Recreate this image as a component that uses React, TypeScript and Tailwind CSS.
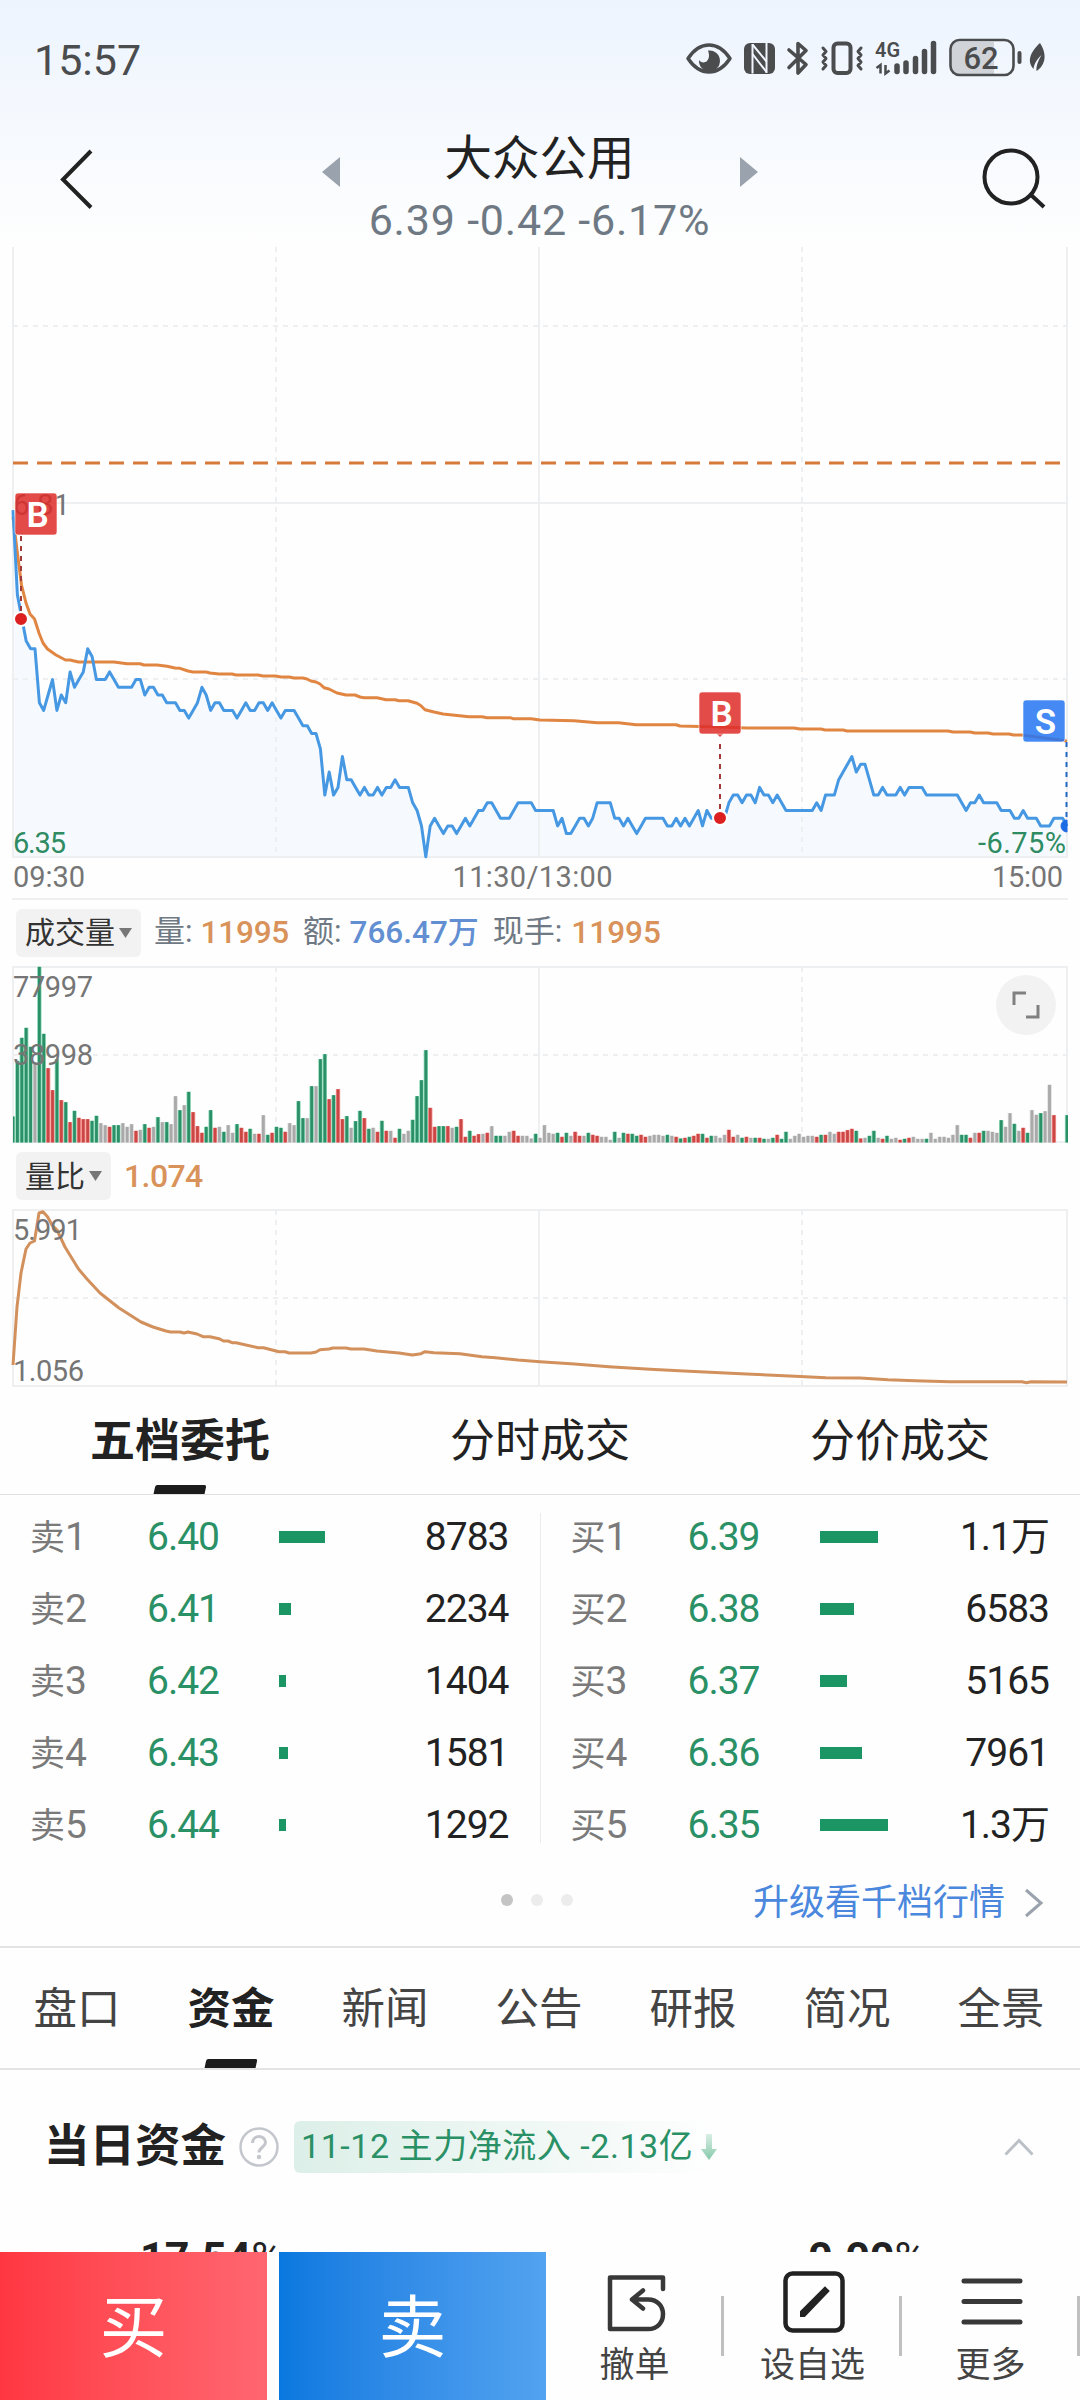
import type { ReactNode } from "react";

const FONT = "font-[Roboto,'Noto_Sans_CJK_SC',sans-serif]";

// One price per minute, in cents above the day's low of 6.35
const PRICES = (
  "45 34 31 28 27 27 20 19 21 23 19 21 20 24 22 23 24 27 26 23 23 23 24 23 22 22 22 22 23 23 " +
  "21 22 22 21 21 20 20 20 19 19 18 19 20 22 21 19 20 20 19 19 19 18 19 20 19 19 20 20 19 20 " +
  "19 18 19 19 19 18 17 17 16 16 14 8 11 8 9 13 10 10 9 8 9 8 8 9 8 9 9 10 9 9 " +
  "9 7 6 4 0 4 5 4 3 4 4 3 4 5 4 5 6 6 7 7 6 5 5 5 6 7 7 7 7 6 " +
  "6 6 6 6 4 5 3 3 4 5 5 4 5 7 7 7 7 5 5 4 5 4 3 4 5 5 5 5 5 4 " +
  "4 5 4 5 4 5 6 4 6 5 5 5 5 7 8 8 7 8 8 7 9 8 8 7 8 7 6 6 6 6 " +
  "6 6 6 7 6 8 8 8 10 11 12 13 11 12 12 10 8 8 9 8 8 8 9 8 9 9 9 9 8 8 " +
  "8 8 8 8 8 8 7 6 7 7 8 7 7 7 7 6 6 6 5 5 6 5 5 5 4 4 4 5 5 5 4"
).split(" ").map(Number);

const AVERAGE =
  "13,517 17,550 21.5,585 26,603 30,614 34.5,619 39,633 43,643 47.5,649 56,655 65.5,660 70,660 78.5,662 114,662 " +
  "127,663.7 140,663.7 144,665 157,665 167,666.3 175,668 180,668.3 188,671 193,672 206,672 210,673 219,674 232,674 " +
  "236,675 258,675 263,676 275.5,676 281,677 289,677 294,678 303,678 307,679 311,681 316,682 320,684 324,687.7 " +
  "329,689 337,693 346,695 355,695 360,697 364,697.7 377,697.7 386,699.7 395,699.7 399,700.7 408,700.7 417,703.3 " +
  "421,705.7 425,709.7 434,712 443,714 469,716.7 482,716.7 487,717.7 510,717.7 513,718.7 531,718.7 540,720 " +
  "574,720.7 597,722.7 618.5,722.7 636,724.7 676,724.7 680,726 719,727 747,728 794,728 800,729 821,729 825,730 " +
  "843,730 847,731 948,731 953,732 970,732 975,733 988,733 993,734 1009,734 1013.5,735 1022,735 1067,741";

const RATIO =
  "13,1365 17,1307 21,1273 26,1249 30,1243 34.5,1241 39,1213 43,1211.7 47.5,1216.7 52,1225 57,1230 65,1247 78.5,1269 " +
  "87,1279 100,1293 119,1308 141,1322 153,1327 166,1331 170.5,1332 180,1332 184,1333 188,1332 197,1334 203,1336.7 " +
  "210,1336.7 219,1338.7 223.5,1341 228,1341 232,1342.7 236,1342.7 258,1347.7 263.5,1347.7 279,1351.7 285,1351.7 " +
  "289,1353 311,1353 316,1352 320,1349.7 329,1349 333,1348 346,1348 351,1349 364,1349 377,1351 399,1353 412.5,1355 " +
  "421,1353.7 425,1351.7 434,1352.7 460,1353.7 482,1356.7 495.5,1357.7 518,1360 540,1361.7 574.5,1364 609,1366.7 " +
  "650,1369.3 689,1371.3 746.6,1374 795,1376.3 826,1377.7 860,1378 888,1379.7 915,1380.7 950,1381.7 1022,1381.7 " +
  "1026.5,1382.7 1031,1381.7 1067,1382";

// r = up, g = down, n = flat; the number is the height in thirds of a pixel
const VOLUMES = (
  "g78 g245 g314 g344 g287 n240 g527 g326 r223 r157 g250 r127 g121 r61 g95 r74 r70 r70 g65 g80 n58 n52 r47 g52 g52 n58 n47 n55 r35 n38 " +
  "g55 r44 n47 g76 n61 g61 n55 n139 g97 n112 g152 r91 r49 r29 g47 g97 r44 n47 g32 n52 n29 g55 r44 r32 g41 n26 r26 n82 g23 r29 " +
  "g47 g44 r32 n58 n52 g124 g73 n73 g169 n169 g250 g265 r130 g142 r160 r70 g79 n44 g64 g95 r73 g41 n44 r32 g65 r35 n35 r14 g41 n26 " +
  "n35 g68 g139 g187 g277 r104 r47 g49 g49 r49 n44 g47 r70 r17 g35 r20 r25 n26 r29 n49 g20 g20 n20 n32 r35 r20 n20 n20 n12 g26 " +
  "n14 n52 n29 n26 g29 r17 g29 n20 r32 r20 n20 g29 r23 r20 n17 n17 n8 g32 n14 g29 r26 g26 g20 r23 r17 n20 n23 n23 n20 g23 " +
  "n20 r17 g12 r14 g17 r20 r26 g26 r14 g20 n20 n14 n23 r38 r17 n23 g14 r17 n14 g14 r14 g11 n11 g14 r23 g11 g32 n11 n20 n26 " +
  "n17 n20 n20 r17 g23 r23 n32 n26 r32 r32 r37 r41 g35 r12 n14 g20 g35 n14 r11 g20 n11 n14 r8 g11 r14 n17 n11 n11 g11 n29 " +
  "n11 n17 n17 n14 n23 n52 g23 g23 r14 n29 r29 g35 n35 n32 n29 g67 n47 n88 g56 n35 r44 g29 n97 n83 g88 n94 n173 r82 n0 n0 g82"
).split(" ");

const BAR_COLORS: Record<string, [string, string]> = {
  g: ["#2b9068", "#8fd9b8"],
  r: ["#cb4745", "#f79a98"],
  n: ["#a9a9a9", "#dcdcdc"],
};

const minuteX = (i: number) => 13 + i * 4.392;
const priceY = (p: number) => 856.7 - p * 7.7;

const asks = [
  { label: "卖1", price: "6.40", bar: 46, vol: "8783" },
  { label: "卖2", price: "6.41", bar: 12, vol: "2234" },
  { label: "卖3", price: "6.42", bar: 7, vol: "1404" },
  { label: "卖4", price: "6.43", bar: 9, vol: "1581" },
  { label: "卖5", price: "6.44", bar: 7, vol: "1292" },
];

const bids = [
  { label: "买1", price: "6.39", bar: 58, vol: "1.1万" },
  { label: "买2", price: "6.38", bar: 34, vol: "6583" },
  { label: "买3", price: "6.37", bar: 27, vol: "5165" },
  { label: "买4", price: "6.36", bar: 42, vol: "7961" },
  { label: "买5", price: "6.35", bar: 68, vol: "1.3万" },
];

const sections = ["盘口", "资金", "新闻", "公告", "研报", "简况", "全景"];

function StatusIcons() {
  return (
    <svg width="364" height="40" viewBox="684 38 364 40" fill="none" stroke="#4a4c4e">
      {/* eye comfort */}
      <path d="M688 58.500C694 49.500 701 45 709 45s15 4.500 21 13.500c-6 9-13 13.500-21 13.500s-15-4.500-21-13.500z" strokeWidth="3.500" strokeLinejoin="round" />
      <path d="M708 50.500a10.500 10.500 0 1 1-9 9.500c1.500 2.500 5.500 3.500 8 1 2.800-3 2.200-7.500 1-10.500z" fill="#4a4c4e" stroke="none" />
      {/* NFC */}
      <rect x="744" y="43" width="31" height="31" rx="6" fill="#4a4c4e" stroke="none" />
      <path d="M752.500 44v29.500M766.500 43v30" stroke="#f1f6fe" strokeWidth="2" />
      <path d="M752.500 44.500l14 17M752.500 54l14 18" stroke="#f1f6fe" strokeWidth="2" />
      {/* bluetooth */}
      <path d="M789 50l17 14.500-8 8.500V43.500l8 7-17 17" strokeWidth="3.600" strokeLinejoin="round" strokeLinecap="round" />
      {/* vibrate */}
      <rect x="833.500" y="43.500" width="17" height="29.500" rx="4" strokeWidth="4" />
      <path d="M823 48l3 3.500-3 3.500 3 3.500-3 3.500 3 3.500-3 3.500M861 48l-3 3.500 3 3.500-3 3.500 3 3.500-3 3.500 3 3.500" strokeWidth="3" strokeLinejoin="round" strokeLinecap="round" />
      <text x="875" y="57" fontSize="21" fontWeight="600" textLength="25" lengthAdjust="spacingAndGlyphs" fill="#4a4c4e" stroke="none">4G</text>
      <path d="M880.500 73.500v-8.500l-4 3M885.500 65v8.500l4-3" strokeWidth="2.500" />
      <path d="M897 66v5.500M906 63v8.500M915.500 58.500v13M924.500 51.500v20M933.500 43.500v28" strokeWidth="5.500" strokeLinecap="round" />
      {/* battery */}
      <rect x="952" y="42" width="42" height="32" fill="#d0d3d7" stroke="none" />
      <rect x="950.500" y="40" width="63" height="35" rx="9" strokeWidth="2.600" />
      <text x="981" y="69" fontSize="31" fontWeight="500" textAnchor="middle" fill="#4a4c4e" stroke="none">62</text>
      <path d="M1019.500 53v9" strokeWidth="4" strokeLinecap="round" />
      <path d="M1040 43c6 9 7 20-2 27l-1.500 1c-.5-5 2-11 5-16-5 5-7.500 9-8 14-8-9-1-19 6.500-26z" fill="#4a4c4e" stroke="none" />
    </svg>
  );
}

function Grid({ top, bottom, dashes }: { top: number; bottom: number; dashes: number[] }) {
  return (
    <g stroke="#eeeff0" strokeWidth="2">
      <path d={`M13 ${top}V${bottom}M539 ${top}V${bottom}M1067 ${top}V${bottom}M12 ${bottom}H1068`} />
      <path d={`M276 ${top}V${bottom}M802 ${top}V${bottom}`} strokeDasharray="5 5" />
      {dashes.map((y) => (
        <path key={y} d={`M13 ${y}H1067`} strokeDasharray="5 5" />
      ))}
    </g>
  );
}

function Marker({ x, y, letter, color }: { x: number; y: number; letter: string; color: string }) {
  return (
    <g>
      <rect x={x} y={y} width="42" height="42" rx="3" fill={color} fillOpacity="0.85" stroke="#fff" strokeOpacity="0.6" />
      <text x={x + 22.5} y={y + 33.5} fontSize="35" fontWeight="600" fill="#fff" textAnchor="middle">{letter}</text>
    </g>
  );
}

function PriceChart() {
  const line = PRICES.map((p, i) => `${minuteX(i).toFixed(1)},${priceY(p).toFixed(1)}`).join(" ");
  return (
    <svg width="1080" height="653" viewBox="0 247 1080 653" fontSize="29" className="block shrink-0">
      <polygon points={`13,857 ${line} 1067,857`} fill="#f6faff" />
      <Grid top={247} bottom={857} dashes={[326, 679]} />
      <path d="M13 503H1067M12 899H1068" stroke="#eeeff0" strokeWidth="2" />
      <path d="M13 463H1067" stroke="#d67a3c" strokeWidth="3" strokeDasharray="15 9" />
      <polyline points={AVERAGE} fill="none" stroke="#e08642" strokeWidth="3" strokeLinejoin="round" />
      <polyline points={line} fill="none" stroke="#4798e2" strokeWidth="3" strokeLinejoin="round" />
      <text x="13" y="515" fill="#757575" fontSize="29.500" textLength="57">6.81</text>
      <text x="13" y="853" fill="#2e8b62" textLength="53">6.35</text>
      <text x="1066" y="853" fill="#2e8b62" textAnchor="end" textLength="88">-6.75%</text>
      <path d="M21 536V612M720 744V812" stroke="#a33a3a" strokeWidth="2" strokeDasharray="5 5" />
      <path d="M1066.500 742V820" stroke="#2568c4" strokeWidth="2" strokeDasharray="5 5" />
      <g stroke="#fff" strokeWidth="2">
        <circle cx="21" cy="619" r="7" fill="#dc2020" />
        <circle cx="720" cy="818" r="7" fill="#dc2020" />
      </g>
      <path d="M1067 820a6 6 0 0 0 0 12z" fill="#1d6ae5" stroke="#1d6ae5" strokeWidth="1" />
      <path d="M716 733l4 4 4-4z" fill="#e44b49" />
      <Marker x={15} y={493} letter="B" color="#de2b29" />
      <Marker x={699} y={692} letter="B" color="#de2b29" />
      <Marker x={1023} y={700} letter="S" color="#2474f2" />
      <g fill="#757575">
        <text x="13" y="887" textLength="72">09:30</text>
        <text x="532.500" y="887" textAnchor="middle" textLength="160">11:30/13:00</text>
        <text x="1063" y="887" textAnchor="end" textLength="71">15:00</text>
      </g>
    </svg>
  );
}

function VolumeChart() {
  const bars = VOLUMES.map((v, i) => ({ x: minuteX(i), h: Number(v.slice(1)) / 3, colors: BAR_COLORS[v[0]] }));
  return (
    <svg width="1080" height="179" viewBox="0 965 1080 179" fontSize="29" className="block shrink-0">
      <Grid top={967} bottom={1142} dashes={[1055]} />
      <path d="M12 967H1068" stroke="#eeeff0" strokeWidth="2" />
      <svg x="13" y="965" width="1055" height="179" viewBox="13 965 1055 179">
        {bars.map((b, i) => (
          <rect key={i} x={b.x - 2.2} y={1142.5 - b.h} width="4.400" height={b.h} fill={b.colors[1]} />
        ))}
        {bars.map((b, i) => (
          <rect key={i} x={b.x - 1.4} y={1142.5 - b.h} width="2.800" height={b.h} fill={b.colors[0]} />
        ))}
      </svg>
      <text x="13" y="997" fill="#757575" textLength="80">77997</text>
      <text x="13" y="1065" fill="#757575" textLength="80">38998</text>
      <circle cx="1026" cy="1005" r="30" fill="#f2f2f2" />
      <path d="M1014 1005v-12h12M1038 1005v12h-12" stroke="#808080" strokeWidth="3" fill="none" />
    </svg>
  );
}

function RatioChart() {
  return (
    <svg width="1080" height="180" viewBox="0 1208 1080 180" fontSize="29" className="block shrink-0">
      <Grid top={1210} bottom={1386} dashes={[1298]} />
      <path d="M12 1210H1068" stroke="#eeeff0" strokeWidth="2" />
      <polyline points={RATIO} fill="none" stroke="#d2905c" strokeWidth="3" strokeLinejoin="round" />
      <text x="13" y="1240" fill="#757575" textLength="69">5.991</text>
      <text x="13" y="1381" fill="#757575" textLength="71">1.056</text>
    </svg>
  );
}

function IndicatorPill({ children }: { children: ReactNode }) {
  return (
    <div className="flex h-12 items-center rounded-md bg-[#f2f2f2] pl-[9px] pr-2 text-[30px] text-[#333]">
      {children}
      <svg width="15" height="10" viewBox="0 0 15 10" className="ml-[3px]">
        <path d="M1 0h13L7.500 10z" fill="#777" />
      </svg>
    </div>
  );
}

function OrderColumn({ rows }: { rows: typeof asks }) {
  return (
    <div className="w-[540px]">
      {rows.map((row) => (
        <div key={row.label} className="flex h-[72.1px] items-center pl-[30px] pr-[31px] text-[39px]">
          <span className="w-[117px] text-[#7a7a7a]">
            <span className="text-[35px]">{row.label[0]}</span>
            {row.label[1]}
          </span>
          <span className="w-[132px] tracking-[-1px] text-[#2a9065]">{row.price}</span>
          <span className="h-3 bg-[#1a9563]" style={{ width: row.bar }} />
          <span className="ml-auto tracking-[-1px] text-[#222]">{row.vol}</span>
        </div>
      ))}
    </div>
  );
}

function TabMark() {
  return <span className="absolute bottom-0 left-1/2 h-[9px] w-[51px] -translate-x-1/2 -skew-x-12 rounded-t-[2px] bg-[#1c1c1c]" />;
}

export default function App() {
  return (
    <div className={`flex h-[2400px] w-[1080px] flex-col overflow-hidden bg-[#fefefe] ${FONT}`}>
      <div className="flex min-h-0 flex-1 flex-col overflow-hidden">
        <header className="flex h-[247px] shrink-0 flex-col bg-linear-to-b from-[#edf4fe] to-[#fefefe]">
          <div className="flex h-[116px] items-center justify-between pl-[34px] pr-8 text-[43px] text-[#4a4c4e]">
            <span className="pt-1">15:57</span>
            <StatusIcons />
          </div>
          <div className="flex h-[131px] items-start justify-between pl-[34px] pr-[30px]">
            <svg width="70" height="64" viewBox="0 0 70 64" className="mt-[32px]" fill="none" stroke="#222" strokeWidth="4">
              <path d="M57 3L29 31.500l28 28" />
            </svg>
            <div className="mr-[5px] flex flex-col items-center">
              <div className="flex h-[84px] items-center gap-[105px]">
                <svg width="18" height="30" viewBox="0 0 18 30" className="mt-[28px]">
                  <path d="M18 0v30L0 15z" fill="#9aa3ad" />
                </svg>
                <h1 className="mt-[3px] text-[47.500px] leading-none text-[#222]">大众公用</h1>
                <svg width="18" height="30" viewBox="0 0 18 30" className="mt-[28px]">
                  <path d="M0 0v30l18-15z" fill="#9aa3ad" />
                </svg>
              </div>
              <p className="mt-[-1px] text-[43px] leading-[42px] tracking-[0.8px] text-[#6e7984]">6.39 -0.42 -6.17%</p>
            </div>
            <svg width="70" height="64" viewBox="980 147 70 64" className="mt-[31px]" fill="none" stroke="#222" strokeWidth="4">
              <circle cx="1011" cy="177" r="26.500" />
              <path d="M1030 194l14 13" />
            </svg>
          </div>
        </header>

        <PriceChart />

        <div className="flex h-[65px] shrink-0 items-center pl-4 text-[31px] text-[#6e7984]">
          <IndicatorPill>成交量</IndicatorPill>
          <span className="ml-[13px]">量:</span>
          <b className="ml-[8px] text-[31.500px] font-medium tracking-[-0.2px] text-[#d8925a]">11995</b>
          <span className="ml-[14px]">额:</span>
          <b className="ml-[8px] text-[31.500px] font-medium text-[#628fd2]">
            766.47<span className="text-[31px]">万</span>
          </b>
          <span className="ml-[14px]">现手:</span>
          <b className="ml-[9px] text-[31.500px] font-medium text-[#d8925a]">11995</b>
        </div>
        <VolumeChart />

        <div className="flex h-16 shrink-0 items-center pl-4">
          <IndicatorPill>量比</IndicatorPill>
          <b className="ml-[13px] text-[32px] font-medium tracking-[-0.6px] text-[#d8925a]">1.074</b>
        </div>
        <RatioChart />

        <nav className="grid h-[107px] shrink-0 grid-cols-3 border-b border-[#e0e0e0] text-center text-[45px] leading-[108px] text-[#222]">
          <span className="relative h-[106px] font-bold">
            五档委托
            <TabMark />
          </span>
          <span>分时成交</span>
          <span>分价成交</span>
        </nav>

        <div className="flex h-[368px] shrink-0 pt-[6px]">
          <OrderColumn rows={asks} />
          <span className="mt-[12px] h-[330px] w-px shrink-0 bg-[#ececec]" />
          <OrderColumn rows={bids} />
        </div>

        <div className="relative flex h-[85px] shrink-0 items-center justify-end border-b-2 border-[#e3e3e3] pb-1 pr-[36px]">
          <div className="absolute inset-x-0 top-[31px] flex justify-center gap-[18px] pr-[6px]">
            <span className="size-3 rounded-full bg-[#c4c4c4]" />
            <span className="size-3 rounded-full bg-[#ececec]" />
            <span className="size-3 rounded-full bg-[#ececec]" />
          </div>
          <span className="text-[36px] text-[#4a87dd]">升级看千档行情</span>
          <svg width="20" height="30" viewBox="0 0 20 30" className="ml-[19px]" fill="none" stroke="#9aa3ad" strokeWidth="3">
            <path d="M2 2l15 13L2 28" />
          </svg>
        </div>

        <nav className="grid h-[122px] shrink-0 grid-cols-7 border-b-2 border-[#e3e3e3] pr-[2px] text-center text-[43.500px] leading-[123px] text-[#444]">
          {sections.map((name) =>
            name === "资金" ? (
              <span key={name} className="relative h-[120px] font-bold text-[#222]">
                {name}
                <TabMark />
              </span>
            ) : (
              <span key={name} className="h-[120px]">{name}</span>
            )
          )}
        </nav>

        <div className="flex h-[154px] shrink-0 items-center pl-[44px] pr-[46px]">
          <h2 className="text-[45.500px] font-bold text-[#222]">当日资金</h2>
          <svg width="42" height="42" viewBox="0 0 42 42" className="ml-[12px]" fill="none" stroke="#c3c7cc" strokeWidth="2.500">
            <circle cx="21" cy="21" r="18.500" />
            <path d="M14.500 17c0-4 3-6.500 6.500-6.500s6.500 2.500 6.500 6c0 4.500-6.500 5-6.500 10" strokeWidth="3" />
            <circle cx="21" cy="31" r="1" fill="#c3c7cc" />
          </svg>
          <div className="ml-[14px] flex h-[52px] items-center rounded-l-md bg-linear-to-r from-[#dcefe8] to-[#fefefe] pb-[2px] pl-[7px] text-[34px] tracking-[0.55px] text-[#2a9065]">
            11-12 主力净流入 -2.13亿
            <svg width="16" height="26" viewBox="0 0 16 26" className="ml-[8px] mt-[2px]">
              <defs>
                <linearGradient id="fall" x1="0" y1="0" x2="0" y2="1">
                  <stop offset="0" stopColor="#d9efe5" />
                  <stop offset="1" stopColor="#86c9ab" />
                </linearGradient>
              </defs>
              <path d="M5 0h6v15h5L8 26 0 15h5z" fill="url(#fall)" />
            </svg>
          </div>
          <svg width="30" height="18" viewBox="0 0 30 18" className="ml-auto" fill="none" stroke="#bcc1c7" strokeWidth="3">
            <path d="M1.500 16.500L15 2.500l13.500 14" />
          </svg>
        </div>

        <div className="grid h-[60px] shrink-0 grid-cols-2 pt-[8px] text-[43px] font-bold leading-[50px] text-[#222]">
          <span className="pl-[140px]">17.54<span className="font-normal">%</span></span>
          <span className="pl-[268px]">0.00<span className="font-normal">%</span></span>
        </div>
      </div>

      <footer className="flex h-[148px] shrink-0 bg-[#fefefe] text-[35px] text-[#444]">
        <button className="w-[267px] bg-linear-to-r from-[#ff3642] to-[#ff6670] pt-[5px] text-[68px] text-white">买</button>
        <button className="ml-3 w-[267px] bg-linear-to-r from-[#0878df] to-[#52a3f0] pt-[5px] text-[68px] text-white">卖</button>
        <div className="flex w-[178px] flex-col items-center pl-1 pt-[20px]">
          <svg width="64" height="64" viewBox="0 0 64 64" fill="none" stroke="#383838" strokeWidth="4.500" strokeLinejoin="round" strokeLinecap="round">
            <path d="M58 17V5.500H5V57h38c20 0 20-29.500 0-29.500H28M38 18.500l-11 9 11 9" />
          </svg>
          <span className="mt-[4px] pr-[5px] leading-[52px]">撤单</span>
        </div>
        <span className="-ml-[3px] mt-[44px] h-[60px] w-[3px] bg-[#c0c0c0]" />
        <div className="flex w-[178px] flex-col items-center pl-[2px] pt-[18px]">
          <svg width="64" height="64" viewBox="0 0 64 64" fill="none" stroke="#222">
            <rect x="3.500" y="3.500" width="57" height="57" rx="7" strokeWidth="4.500" />
            <path d="M20 45v-3l23-23 2 2-23 24z" strokeWidth="4" fill="#222" />
          </svg>
          <span className="mt-[6px] pr-[3px] leading-[52px]">设自选</span>
        </div>
        <span className="-ml-[3px] mt-[44px] h-[60px] w-[3px] bg-[#c0c0c0]" />
        <div className="flex w-[178px] flex-col items-center pl-[2px] pt-[18px]">
          <svg width="64" height="64" viewBox="0 0 64 64" stroke="#383838" strokeWidth="5" strokeLinecap="round">
            <path d="M4 11h56M4 31.500h56M4 52h56" />
          </svg>
          <span className="mt-[6px] pr-[3px] leading-[52px]">更多</span>
        </div>
        <span className="-ml-[3px] mt-[44px] h-[60px] w-[3px] bg-[#c0c0c0]" />
      </footer>
    </div>
  );
}
